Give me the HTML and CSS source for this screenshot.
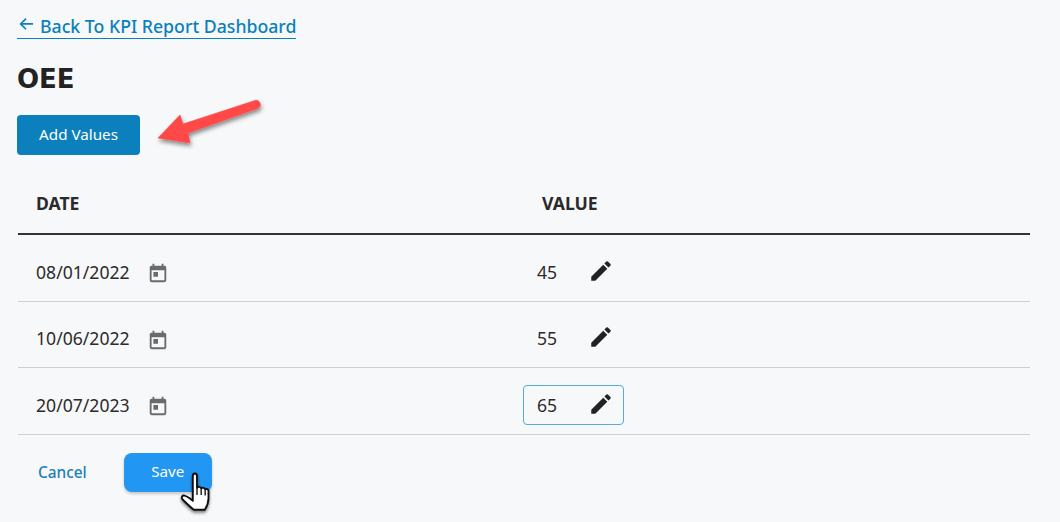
FILE: index.html
```html
<!DOCTYPE html>
<html lang="en">
<head>
<meta charset="utf-8">
<title>OEE</title>
<link rel="stylesheet" href="styles.css">
</head>
<body>
<main class="page">
  <a class="back" href="#">
    <svg class="back-icon" viewBox="0 0 16 16"><path d="M15 7.900H3.200M8 2.600 2.600 7.900 8 13.200" fill="none" stroke="currentColor" stroke-width="1.600"/></svg>
    <span>Back To KPI Report Dashboard</span>
  </a>
  <h1 class="title">OEE</h1>
  <button class="btn btn-add">Add Values</button>
  <section class="table">
    <div class="row head"><div class="c-date">DATE</div><div class="c-value">VALUE</div></div>
    <div class="row">
      <div class="c-date"><span class="date">08/01/2022</span><svg class="cal" viewBox="0 0 24 24"><path d="M19 4h-1V2h-2v2H8V2H6v2H5c-1.100 0-2 .9-2 2v14c0 1.100.9 2 2 2h14c1.100 0 2-.9 2-2V6c0-1.100-.9-2-2-2zm0 16H5V9h14v11zM7 11h5v5H7z"/></svg></div>
      <div class="c-value"><div class="field"><span>45</span><svg class="pen" viewBox="0 0 24 24"><path d="M3 17.250V21h3.750L17.810 9.940l-3.750-3.750L3 17.250zM20.710 7.040a1 1 0 0 0 0-1.410l-2.340-2.340a1 1 0 0 0-1.410 0l-1.830 1.830 3.750 3.750 1.830-1.830z"/></svg></div></div>
    </div>
    <div class="row">
      <div class="c-date"><span class="date">10/06/2022</span><svg class="cal" viewBox="0 0 24 24"><path d="M19 4h-1V2h-2v2H8V2H6v2H5c-1.100 0-2 .9-2 2v14c0 1.100.9 2 2 2h14c1.100 0 2-.9 2-2V6c0-1.100-.9-2-2-2zm0 16H5V9h14v11zM7 11h5v5H7z"/></svg></div>
      <div class="c-value"><div class="field"><span>55</span><svg class="pen" viewBox="0 0 24 24"><path d="M3 17.250V21h3.750L17.810 9.940l-3.750-3.750L3 17.250zM20.710 7.040a1 1 0 0 0 0-1.410l-2.340-2.340a1 1 0 0 0-1.410 0l-1.830 1.830 3.750 3.750 1.830-1.830z"/></svg></div></div>
    </div>
    <div class="row">
      <div class="c-date"><span class="date">20/07/2023</span><svg class="cal" viewBox="0 0 24 24"><path d="M19 4h-1V2h-2v2H8V2H6v2H5c-1.100 0-2 .9-2 2v14c0 1.100.9 2 2 2h14c1.100 0 2-.9 2-2V6c0-1.100-.9-2-2-2zm0 16H5V9h14v11zM7 11h5v5H7z"/></svg></div>
      <div class="c-value"><div class="field active"><span>65</span><svg class="pen" viewBox="0 0 24 24"><path d="M3 17.250V21h3.750L17.810 9.940l-3.750-3.750L3 17.250zM20.710 7.040a1 1 0 0 0 0-1.410l-2.340-2.340a1 1 0 0 0-1.410 0l-1.830 1.830 3.750 3.750 1.830-1.830z"/></svg></div></div>
    </div>
  </section>
  <div class="actions">
    <a class="cancel" href="#">Cancel</a>
    <button class="btn btn-save">Save</button>
  </div>
</main>
<svg class="arrow" viewBox="0 0 110 60"><defs><filter id="sh" x="-20%" y="-30%" width="140%" height="170%"><feDropShadow dx="1" dy="3" stdDeviation="2" flood-color="#000" flood-opacity=".45"/></filter></defs><path d="M0 41 22 18 25 27 97 3.500a4.200 4.200 0 0 1 3 7.800L30 36 32 46z" fill="#ff4848" stroke="#ff4848" stroke-width=".6" stroke-linejoin="round" filter="url(#sh)"/></svg>
<svg class="hand" viewBox="0 0 36 44"><defs><filter id="hs" x="-30%" y="-20%" width="160%" height="150%"><feDropShadow dx="0" dy="2" stdDeviation="1.500" flood-color="#000" flood-opacity=".5"/></filter></defs><path d="M14 6c0-3.500 4-3.500 4 0v11c1-1.500 3.500-1 4 .5 1-1 3.500-.5 3.800 1 1-.8 3.200-.3 3.200 1.500v7c0 5-1.500 8-3.500 11H15c-3-2-7-6-11-10-1.500-2 0-4 2-3.500 2 .5 5 2.500 8 5z" fill="#fff" stroke="#111" stroke-width="1.800" stroke-linejoin="round" filter="url(#hs)"/><path d="M18 17v7M22 17.500v6.500M25.800 18.500v6" stroke="#111" stroke-width="1.300" fill="none"/></svg>
</body>
</html>
```
FILE: styles.css
```css
* { box-sizing: border-box; }
html, body { margin: 0; height: 100%; }
body {
  background: #f7f8fa;
  color: #2b2b2b;
  font-family: "Noto Sans", "Open Sans", sans-serif;
  overflow: hidden;
  position: relative;
}
.page { padding: 14px 30px 0 17px; }
.back {
  display: inline-flex;
  align-items: center;
  gap: 6px;
  height: 25px;
  color: #0b80bc;
  text-decoration: none;
  font-size: 17.700px;
  font-weight: 500;
  line-height: 24px;
  border-bottom: 1px solid #0b80bc;
}
.back-icon { width: 16px; height: 16px; margin: -5px 0 0 1px; }
.title {
  margin: 23px 0 0;
  font-family: "DejaVu Sans", "Noto Sans", sans-serif;
  font-size: 26px;
  font-weight: 700;
  line-height: 34px;
  color: #222;
}
.btn {
  display: block;
  border: 0;
  color: #fff;
  font-family: inherit;
  font-size: 15.200px;
  font-weight: 400;
  padding: 0 0 2px;
}
.btn-add {
  width: 123px;
  height: 40px;
  margin-top: 19px;
  background: #0b80bc;
  border-radius: 4px;
}
.table { margin: 17px 0 0 1px; }
.row {
  display: flex;
  align-items: center;
  height: 66.500px;
  padding-top: 8px;
  border-bottom: 1px solid #cfcfcf;
  font-size: 17.600px;
}
.row.head {
  height: 63px;
  padding-top: 0;
  border-bottom: 2px solid #333;
  font-weight: 700;
  font-size: 17.600px;
  color: #2a2a2a;
}
.c-date {
  width: 505px;
  padding-left: 18px;
  display: flex;
  align-items: center;
  gap: 17px;
}
.c-value { flex: 1; }
.head .c-value { padding-left: 19px; }
.date { line-height: 22px; }
.cal { width: 22px; height: 22px; fill: #6a6a6a; margin-top: 3px; }
.field {
  width: 101px;
  height: 40px;
  display: flex;
  align-items: center;
  justify-content: space-between;
  padding: 0 9px 0 13px;
  border: 1px solid transparent;
  border-radius: 4px;
}
.field.active { border-color: #5aaad6; }
.pen { width: 26px; height: 26px; fill: #222; margin-top: -2px; }
.actions {
  display: flex;
  align-items: center;
  gap: 37px;
  margin: 18px 0 0 21px;
}
.cancel {
  color: #1b7fb8;
  text-decoration: none;
  font-size: 15.400px;
  font-weight: 500;
}
.btn-save {
  width: 88px;
  height: 39px;
  background: #2196f3;
  border-radius: 8px;
  box-shadow: 0 2px 3px rgba(0,0,0,.2);
}
.arrow { position: absolute; left: 158px; top: 97px; width: 110px; height: 60px; overflow: visible; }
.hand { position: absolute; left: 178px; top: 470px; width: 38px; height: 46px; overflow: visible; }
```
